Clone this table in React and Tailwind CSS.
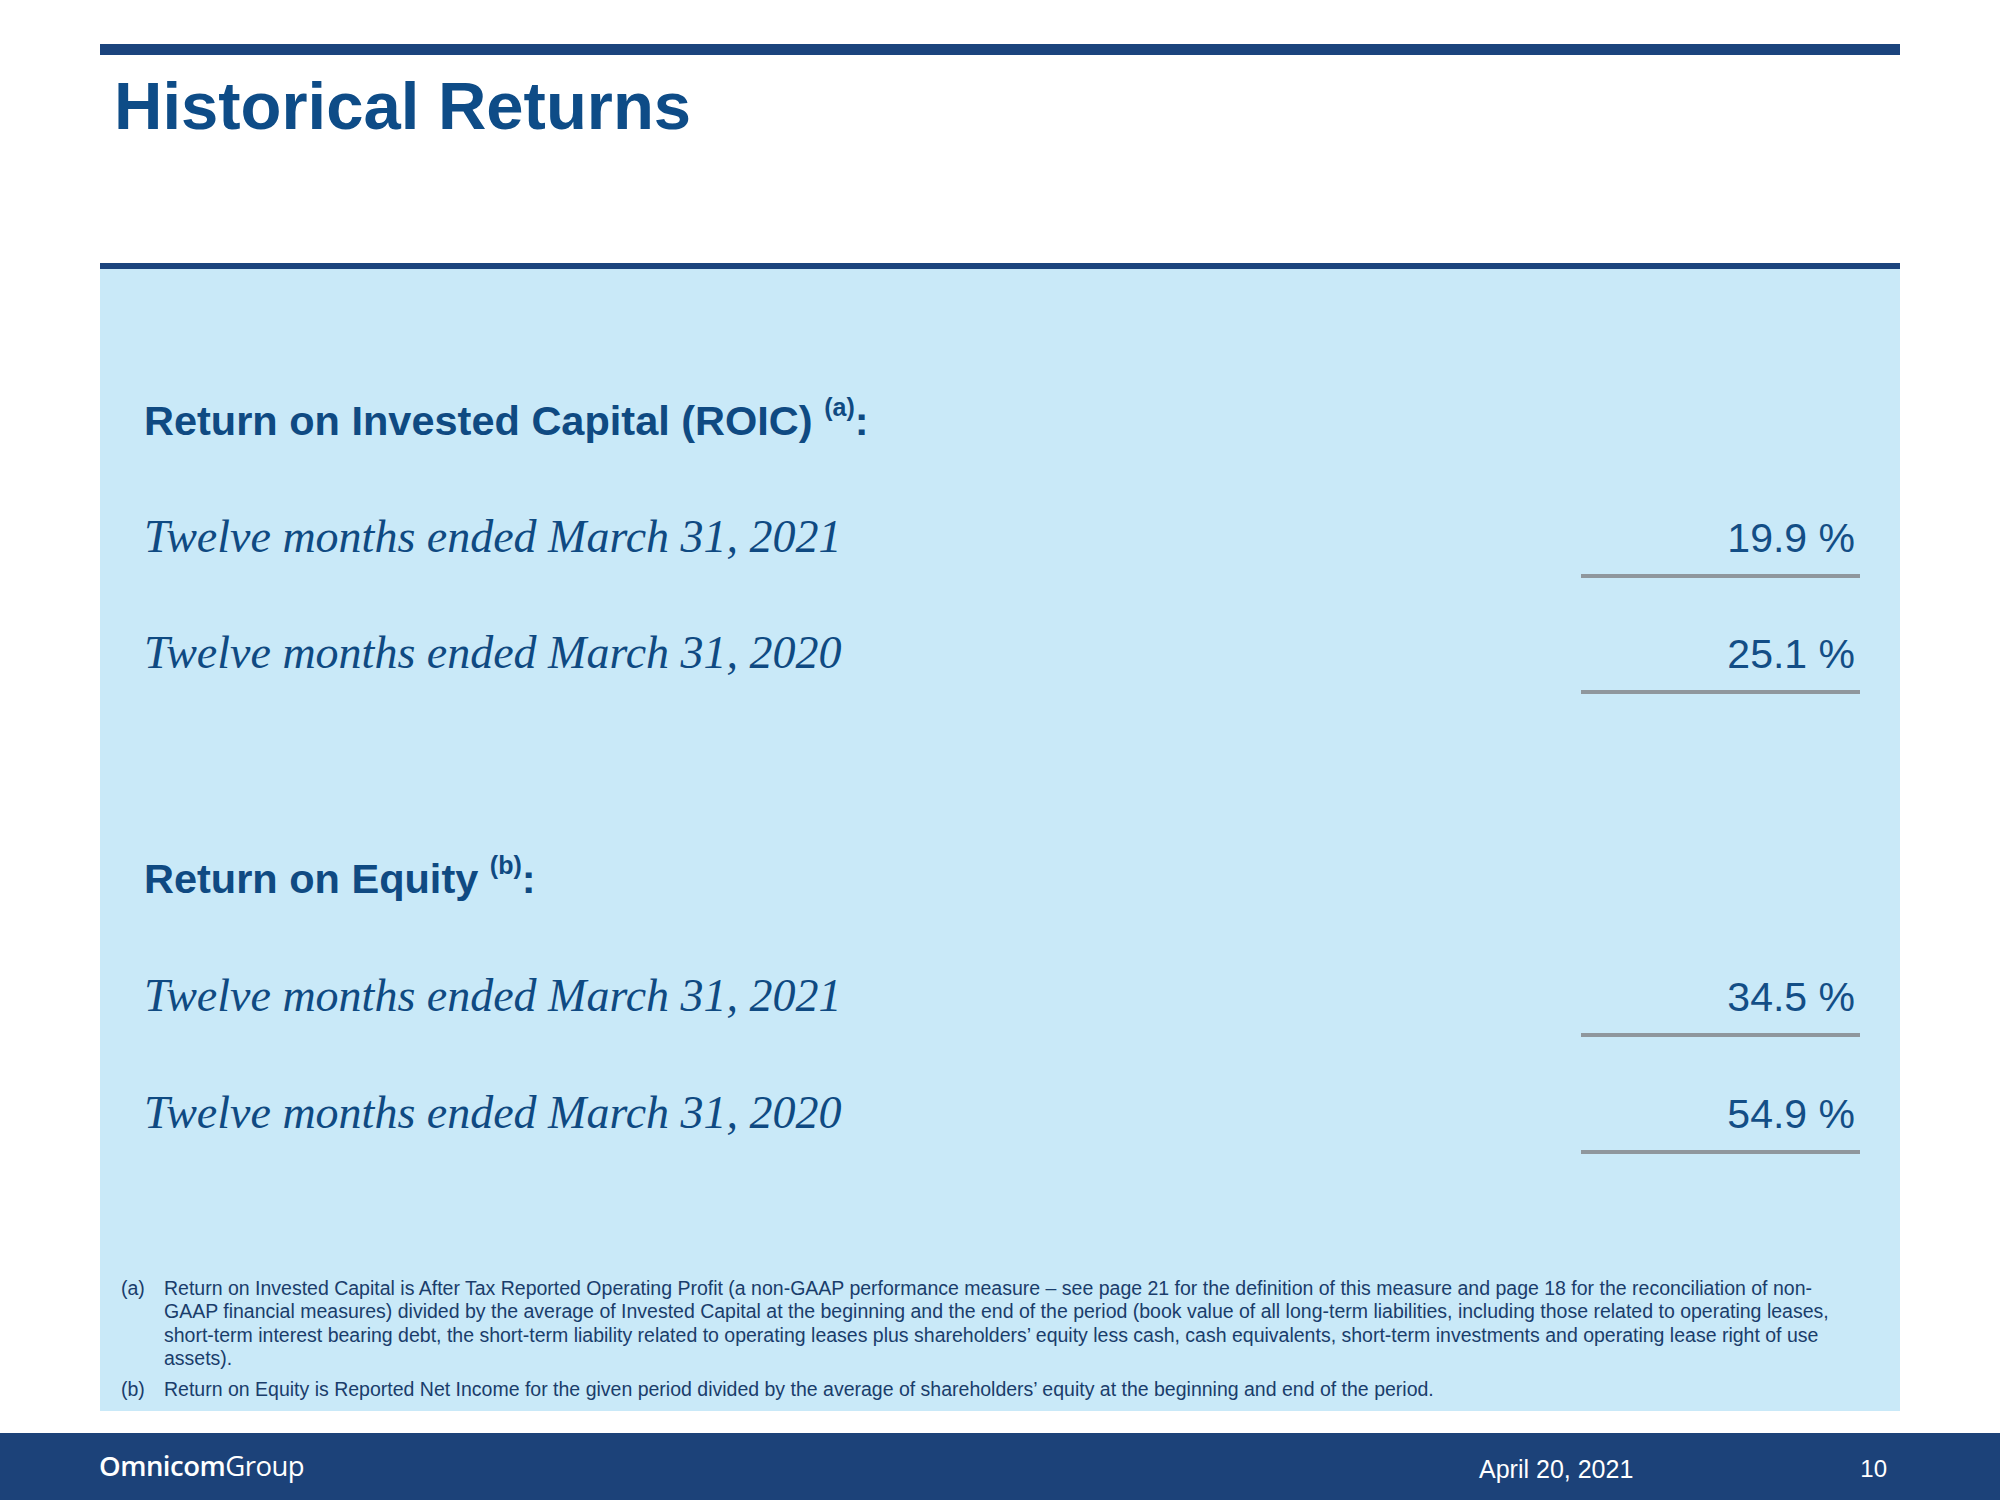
import React from "react";

const sans = "font-['Liberation_Sans',Arial,sans-serif]";
const serif = "font-['Liberation_Serif','Times_New_Roman',serif]";

const ValueRow = ({ label, value, className }) => (
  <div className={`flex items-baseline justify-between ${className}`}>
    <div className={`${serif} italic text-[46px] leading-none text-[#0f4a82]`}>{label}</div>
    <div className={`${sans} w-[279px] border-b-[4px] border-[#8f979d] pr-[5px] pb-[15px] text-right text-[41px] leading-none text-[#134e86]`}>
      {value}
    </div>
  </div>
);

const Heading = ({ text, note, className }) => (
  <div className={`${sans} text-[41.5px] font-bold leading-none text-[#0f4a82] ${className}`}>
    {text} <span className="align-[19px] text-[25px] leading-none">({note})</span>:
  </div>
);

const App = () => {
  return (
    <div className="flex h-[1500px] w-[2000px] flex-col bg-white">
      <div className="h-[44px]" />
      <div className="mx-[100px] h-[11px] bg-[#1b447d]" />

      {/* title */}
      <div className="h-[208px] pl-[114px]">
        <h1 className={`${sans} mt-[17px] text-[67px] font-bold leading-none text-[#0e4c87]`}>
          Historical Returns
        </h1>
      </div>

      <div className="mx-[100px] h-[6px] bg-[#1b447d]" />

      {/* main panel */}
      <div className="mx-[100px] flex h-[1142px] flex-col bg-[#c9e9f8]">
        <div className="pl-[44px] pr-[40px]">
          <Heading text="Return on Invested Capital (ROIC)" note="a" className="mt-[126px]" />
          <ValueRow label="Twelve months ended March 31, 2021" value="19.9 %" className="mt-[72px]" />
          <ValueRow label="Twelve months ended March 31, 2020" value="25.1 %" className="mt-[52px]" />

          <Heading text="Return on Equity" note="b" className="mt-[159px]" />
          <ValueRow label="Twelve months ended March 31, 2021" value="34.5 %" className="mt-[74px]" />
          <ValueRow label="Twelve months ended March 31, 2020" value="54.9 %" className="mt-[53px]" />
        </div>

        {/* footnotes */}
        <div className={`${sans} mt-[123px] pl-[21px] text-[19.5px] leading-[23.3px] text-[#1a3d6b]`}>
          <div className="flex">
            <div className="w-[43px] shrink-0">(a)</div>
            <div className="whitespace-nowrap">
              <div>
                Return on Invested Capital is After Tax Reported Operating Profit (a non-GAAP performance measure – see page 21 for the definition of this measure and page 18 for the reconciliation of non-
              </div>
              <div>
                GAAP financial measures) divided by the average of Invested Capital at the beginning and the end of the period (book value of all long-term liabilities, including those related to operating leases,
              </div>
              <div>
                short-term interest bearing debt, the short-term liability related to operating leases plus shareholders’ equity less cash, cash equivalents, short-term investments and operating lease right of use
              </div>
              <div>assets).</div>
            </div>
          </div>
          <div className="mt-[8px] flex">
            <div className="w-[43px] shrink-0">(b)</div>
            <div className="whitespace-nowrap">
              Return on Equity is Reported Net Income for the given period divided by the average of shareholders’ equity at the beginning and end of the period.
            </div>
          </div>
        </div>
      </div>

      <div className="h-[22px]" />

      {/* footer */}
      <div className="flex h-[67px] items-start bg-[#1c4279] text-white">
        <div className="ml-[99px] mt-[19px] font-['Open_Sans',sans-serif] text-[27.5px] leading-none tracking-[-0.5px]">
          <span className="font-semibold">Omnicom</span>
          <span>Group</span>
        </div>
        <div className={`${sans} ml-auto mt-[24px] text-[25px] leading-none`}>April 20, 2021</div>
        <div className={`${sans} ml-[227px] mr-[113px] mt-[24px] text-[24px] leading-none`}>10</div>
      </div>
    </div>
  );
};

export default App;
